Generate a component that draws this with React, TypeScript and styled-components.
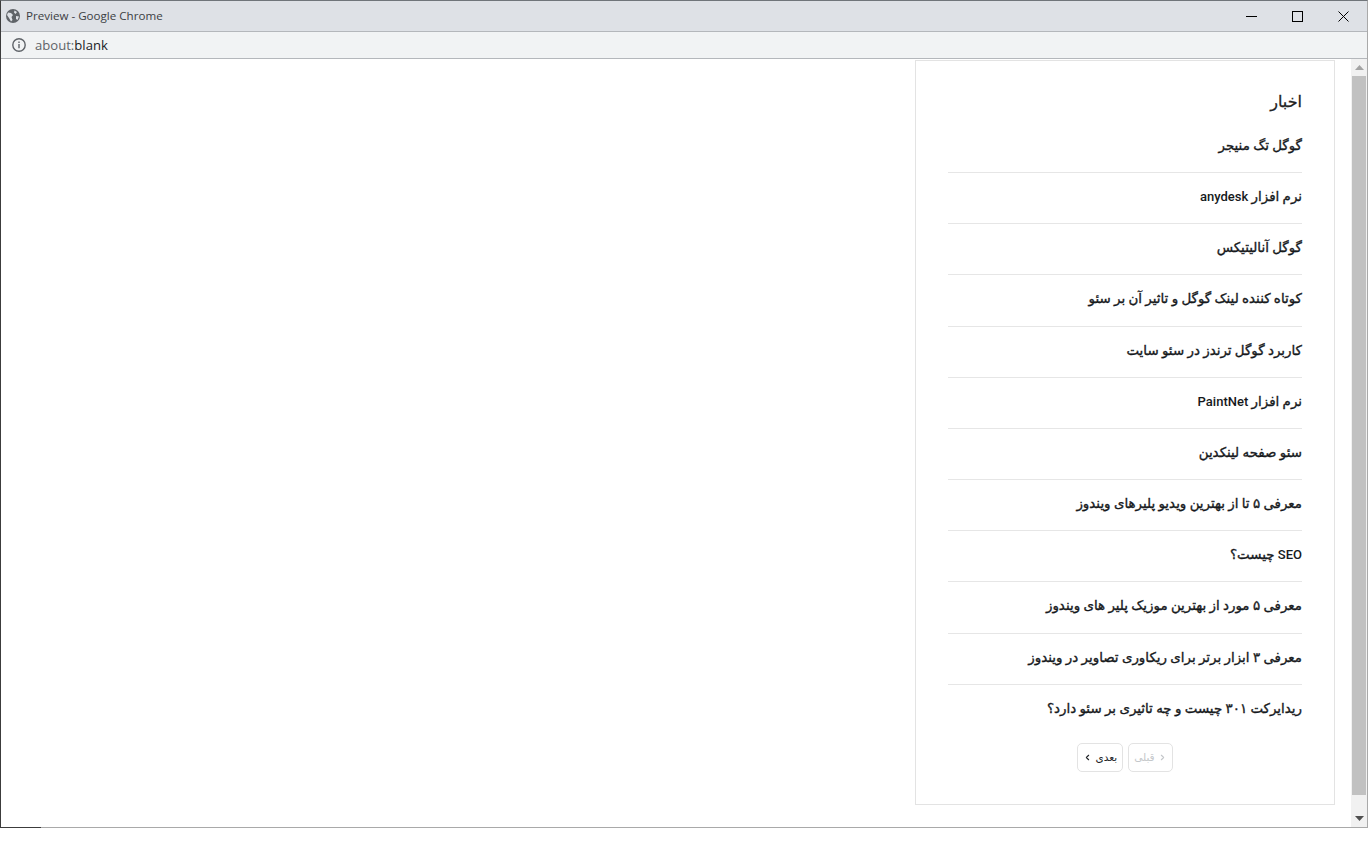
import React from "react";
import styled, { createGlobalStyle } from "styled-components";
import { ChevronLeft, ChevronRight } from "lucide-react";

const GlobalStyle = createGlobalStyle`
  html, body {
    margin: 0;
    padding: 0;
    height: 860px;
    overflow: hidden;
    background: #fff;
    font-family: "Roboto", "DejaVu Sans", sans-serif;
  }
`;

const Chrome = styled.div`
  position: relative;
  width: 1368px;
  height: 828px;
  box-sizing: border-box;
  display: flex;
  flex-direction: column;
  border: 1px solid #a9a9a9;
  border-top-color: #70757a;
  border-left-color: #3c3c3c;

  &::after {
    content: "";
    position: absolute;
    left: -1px;
    bottom: -1px;
    width: 41px;
    height: 1px;
    background: #3c3c3c;
  }
`;

const TitleBar = styled.div`
  height: 30px;
  flex: none;
  display: flex;
  align-items: center;
  background: #dee1e6;
  border-bottom: 1px solid #b4b7bb;
`;

const TitleText = styled.span`
  font-family: "Open Sans", "Liberation Sans", sans-serif;
  font-size: 11.6px;
  line-height: 14px;
  margin-top: -1px;
  color: #3c4043;
  margin-left: 6px;
`;

const Globe = styled.svg`
  width: 14px;
  height: 14px;
  margin-left: 5px;
`;

const WindowButtons = styled.div`
  margin-left: auto;
  display: flex;
  padding-right: 1px;
`;

const WindowButton = styled.div`
  width: 46px;
  height: 28px;
  display: flex;
  align-items: center;
  justify-content: center;
`;

const AddressBar = styled.div`
  height: 26px;
  flex: none;
  display: flex;
  align-items: center;
  background: #f1f3f4;
  border-bottom: 1px solid #b4b7bb;
  font-family: "Open Sans", "Liberation Sans", sans-serif;
  font-size: 13.1px;
`;

const InfoIcon = styled.svg`
  width: 14px;
  height: 14px;
  margin-left: 11px;
  margin-right: 9px;
`;

const Scheme = styled.span`
  color: #5f6368;
`;

const Host = styled.span`
  color: #202124;
`;

const Viewport = styled.div`
  flex: 1;
  min-height: 0;
  display: flex;
`;

const Page = styled.div`
  flex: 1;
  min-width: 0;
  display: flex;
  justify-content: flex-end;
  align-items: flex-start;
  padding: 1px 16px 0 0;
`;

const Card = styled.section`
  width: 420px;
  height: 745px;
  box-sizing: border-box;
  border: 1px solid #e3e3e3;
  padding: 27px 32px 0;
  direction: rtl;
`;

const Heading = styled.h3`
  margin: 0;
  height: 28px;
  line-height: 28px;
  font-size: 16px;
  font-weight: 500;
  -webkit-text-stroke: 0.3px #222;
  color: #222;
`;

const List = styled.ul`
  list-style: none;
  margin: 5.8px 0 0;
  padding: 0;
`;

const Item = styled.li`
  height: 50.2px;
  line-height: 47px;
  border-bottom: 1px solid #e6e6e6;
  font-size: 13.4px;
  font-weight: 500;
  -webkit-text-stroke: 0.35px #16191c;
  color: #16191c;
  white-space: nowrap;

  &:last-child {
    border-bottom: none;
  }
`;

const Latin = styled.span`
  font-size: 13px;
  -webkit-text-stroke: 0;
`;

const Pager = styled.nav`
  display: flex;
  gap: 5px;
  justify-content: center;
  margin-top: 8.2px;
`;

const PageButton = styled.button<{ $disabled?: boolean }>`
  height: 29px;
  box-sizing: border-box;
  display: flex;
  align-items: center;
  gap: 3px;
  padding: 0 5px;
  border: 1px solid #e3e3e3;
  border-radius: 5px;
  background: #fff;
  font-family: inherit;
  font-size: 10.5px;
  direction: rtl;
  color: ${(p) => (p.$disabled ? "#c4c7ca" : "#212529")};
`;

const ScrollTrack = styled.div`
  width: 16px;
  flex: none;
  display: flex;
  flex-direction: column;
  align-items: center;
  background: #f1f1f1;
`;

const ScrollArrow = styled.div`
  height: 17px;
  flex: none;
  display: flex;
  align-items: center;
  justify-content: center;
`;

const ScrollThumb = styled.div`
  width: 14px;
  flex: 1;
  background: #c1c1c1;
  margin-bottom: 15px;
`;

const news = [
  "گوگل تگ منیجر",
  "نرم افزار anydesk",
  "گوگل آنالیتیکس",
  "کوتاه کننده لینک گوگل و تاثیر آن بر سئو",
  "کاربرد گوگل ترندز در سئو سایت",
  "نرم افزار PaintNet",
  "سئو صفحه لینکدین",
  "معرفی ۵ تا از بهترین ویدیو پلیرهای ویندوز",
  "SEO چیست؟",
  "معرفی ۵ مورد از بهترین موزیک پلیر های ویندوز",
  "معرفی ۳ ابزار برتر برای ریکاوری تصاویر در ویندوز",
  "ریدایرکت ۳۰۱ چیست و چه تاثیری بر سئو دارد؟",
];

// latin words sit at a smaller size than the persian text around them
const renderTitle = (title: string) =>
  title
    .split(/([A-Za-z]+)/)
    .map((part, i) => (i % 2 ? <Latin key={i}>{part}</Latin> : part));

export default function App() {
  return (
    <>
      <GlobalStyle />
      <Chrome>
        <TitleBar>
          <Globe viewBox="0 0 14 14">
            <circle cx="7" cy="7" r="7" fill="#5f6368" />
            <path d="M2 3.5l3 .5 2 2-1.5 2 1 3-1.5 1.5L3 9 1 6zM8.5 1.5L11 3 9.5 5 8 3.5zM10 7l3 .5-1.5 3.5L10 10z" fill="#dee1e6" />
          </Globe>
          <TitleText>Preview - Google Chrome</TitleText>
          <WindowButtons>
            <WindowButton>
              <svg width="11" height="11" viewBox="0 0 11 11">
                <path d="M0 5.5h11" stroke="#000" />
              </svg>
            </WindowButton>
            <WindowButton>
              <svg width="11" height="11" viewBox="0 0 11 11">
                <rect x=".5" y=".5" width="10" height="10" fill="none" stroke="#000" />
              </svg>
            </WindowButton>
            <WindowButton>
              <svg width="11" height="11" viewBox="0 0 11 11">
                <path d="M.5.5l10 10M10.5.5l-10 10" stroke="#000" />
              </svg>
            </WindowButton>
          </WindowButtons>
        </TitleBar>
        <AddressBar>
          <InfoIcon viewBox="0 0 14 14">
            <circle cx="7" cy="7" r="6.2" fill="none" stroke="#5f6368" strokeWidth="1.4" />
            <path d="M7 6v4.2M7 3.6v1.3" stroke="#5f6368" strokeWidth="1.4" />
          </InfoIcon>
          <span>
            <Scheme>about:</Scheme>
            <Host>blank</Host>
          </span>
        </AddressBar>
        <Viewport>
          <Page>
            <Card>
              <Heading>اخبار</Heading>
              <List>
                {news.map((title) => (
                  <Item key={title}>{renderTitle(title)}</Item>
                ))}
              </List>
              <Pager>
                <PageButton $disabled>
                  <ChevronRight size={9} strokeWidth={3} />
                  قبلی
                </PageButton>
                <PageButton>
                  بعدی
                  <ChevronLeft size={9} strokeWidth={3} />
                </PageButton>
              </Pager>
            </Card>
          </Page>
          <ScrollTrack>
            <ScrollArrow>
              <svg width="9" height="5" viewBox="0 0 9 5">
                <path d="M4.5 0L9 5H0z" fill="#a3a3a3" />
              </svg>
            </ScrollArrow>
            <ScrollThumb />
            <ScrollArrow>
              <svg width="9" height="5" viewBox="0 0 9 5">
                <path d="M0 0h9L4.5 5z" fill="#505050" />
              </svg>
            </ScrollArrow>
          </ScrollTrack>
        </Viewport>
      </Chrome>
    </>
  );
}
